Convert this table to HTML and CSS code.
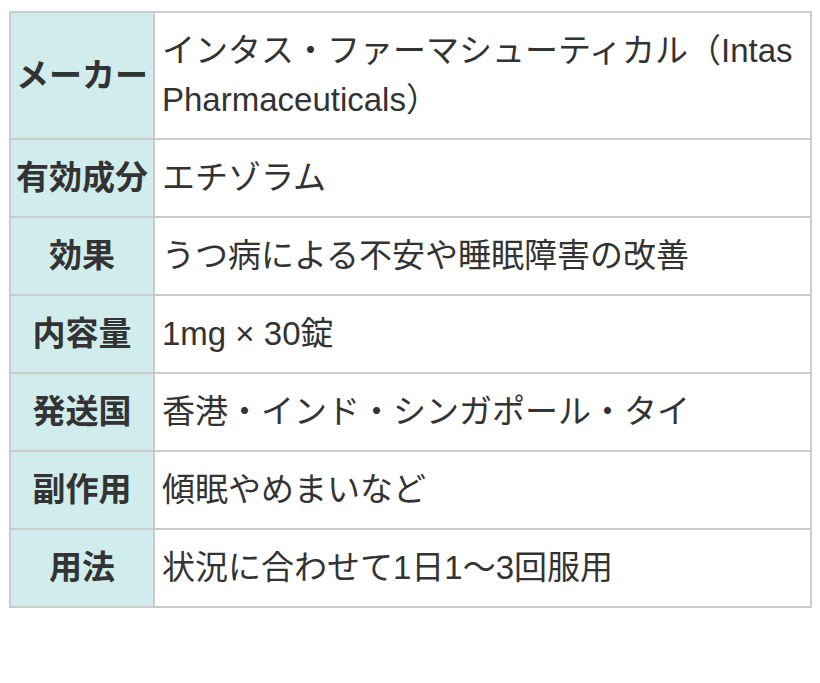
FILE: index.html
```
<!DOCTYPE html>
<html lang="ja">
<head>
<meta charset="utf-8">
<link rel="stylesheet" href="styles.css">
</head>
<body>
<table class="spec">
  <colgroup><col class="c-head"><col></colgroup>
  <tbody>
    <tr><th>メーカー</th><td>インタス・ファーマシューティカル（Intas Pharmaceuticals）</td></tr>
    <tr><th>有効成分</th><td>エチゾラム</td></tr>
    <tr><th>効果</th><td>うつ病による不安や睡眠障害の改善</td></tr>
    <tr><th>内容量</th><td>1mg × 30錠</td></tr>
    <tr><th>発送国</th><td>香港・インド・シンガポール・タイ</td></tr>
    <tr><th>副作用</th><td>傾眠やめまいなど</td></tr>
    <tr><th>用法</th><td>状況に合わせて1日1～3回服用</td></tr>
  </tbody>
</table>
</body>
</html>
```
FILE: styles.css
```
html, body {
  margin: 0;
  padding: 0;
  background: #fff;
}
body {
  padding: 11px 0 0 9px;
  font-family: "Liberation Sans", "Noto Sans CJK JP", sans-serif;
  color: #333;
}
.spec {
  width: 803px;
  table-layout: fixed;
  border-collapse: separate;
  border-spacing: 0;
  border-top: 2px solid #ccc;
  border-left: 2px solid #ccc;
  font-size: 33px;
  line-height: 49px;
}
.c-head {
  width: 144px;
}
.spec th,
.spec td {
  border-right: 2px solid #ccc;
  border-bottom: 2px solid #ccc;
  padding: 13px 7px 14px;
  vertical-align: middle;
}
.spec th {
  background: #d1ecec;
  font-weight: bold;
  text-align: center;
  padding: 13px 0 14px;
  white-space: nowrap;
}
.spec td {
  text-align: left;
  background: #fff;
}
```
